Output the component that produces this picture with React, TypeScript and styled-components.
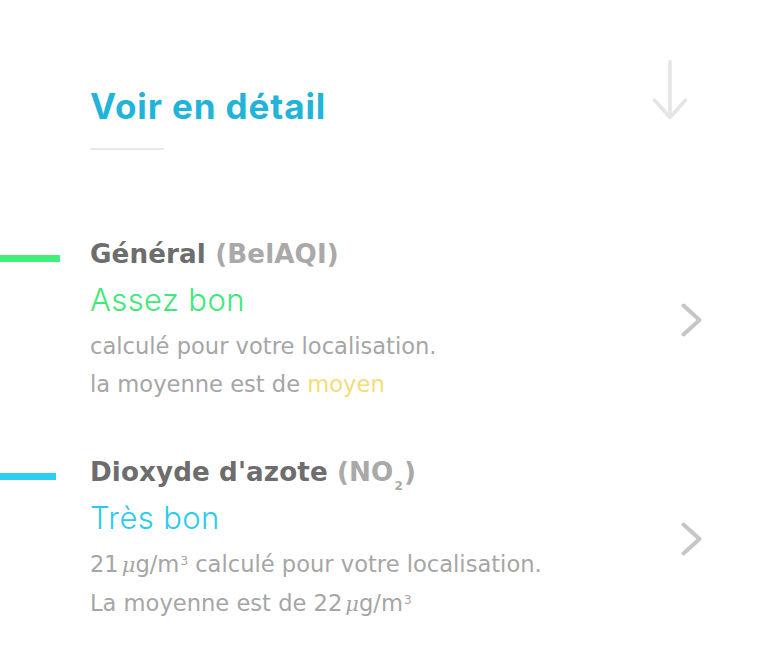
import React from "react";
import styled, { createGlobalStyle } from "styled-components";

const Global = createGlobalStyle`
  html, body { margin: 0; padding: 0; background: #ffffff; }
  body { font-family: "DejaVu Sans", "Noto Sans", sans-serif; -webkit-font-smoothing: antialiased; }
`;

const Page = styled.div`
  width: 760px;
  height: 651px;
  overflow: hidden;
  background: #fff;
  padding-top: 58px;
  box-sizing: border-box;
`;

const Header = styled.div`
  display: flex;
  align-items: flex-start;
  justify-content: space-between;
  padding: 0 72px 0 90px;
`;

const TitleBlock = styled.div`
  display: flex;
  flex-direction: column;
`;

const Title = styled.h1`
  margin: 27px 0 0;
  font-family: Inter, "Noto Sans", sans-serif;
  font-size: 35px;
  line-height: 42px;
  font-weight: 700;
  color: #21b4d8;
  letter-spacing: 0.9px;
`;

const Rule = styled.div`
  width: 74px;
  height: 2px;
  background: #e8e8e8;
  margin-top: 21px;
`;

const ArrowBox = styled.div`
  width: 36px;
  height: 62px;
  display: flex;
`;

const List = styled.div`
  display: flex;
  flex-direction: column;
  gap: 52px;
  margin-top: 87px;
`;

const Row = styled.div`
  display: flex;
  align-items: center;
  position: relative;
`;

const Marker = styled.div<{ $color: string; $width: number }>`
  position: absolute;
  left: 0;
  top: 18px;
  width: ${(p) => p.$width}px;
  height: 7px;
  background: ${(p) => p.$color};
`;

const Body = styled.div`
  flex: 1;
  padding-left: 90px;
  display: flex;
  flex-direction: column;
`;

const Heading = styled.div`
  font-size: 26.2px;
  line-height: 34px;
  font-weight: 700;
  letter-spacing: 0.1px;
  color: #6d6d6d;
`;

const Paren = styled.span`
  color: #a9a9a9;
`;

const Sub = styled.span`
  font-size: 12px;
  vertical-align: -9px;
  line-height: 0;
  margin: 0 1px;
`;

const Status = styled.div<{ $color: string }>`
  font-family: Inter, "Noto Sans", sans-serif;
  font-size: 31px;
  line-height: 40px;
  font-weight: 300;
  letter-spacing: 0.4px;
  color: ${(p) => p.$color};
  margin-top: 9px;
  margin-bottom: 8px;
`;

const Line = styled.div`
  font-size: 22.6px;
  line-height: 37.5px;
  font-weight: 400;
  color: #a6a6a6;
`;

const Highlight = styled.span`
  color: #f4dc79;
`;

const Unit = styled.span`
  font-family: "DejaVu Serif", serif;
  font-style: italic;
  font-size: 21px;
  margin-left: 3px;
`;

const Sup = styled.span`
  font-size: 12px;
  vertical-align: 7px;
  line-height: 0;
  margin-left: 1px;
`;

const ChevronBox = styled.div`
  width: 24px;
  display: flex;
  margin-right: 56px;
`;

const ArrowDown = () => (
  <svg width="36" height="62" viewBox="0 0 36 62" fill="none" stroke="#e5e5e5" strokeWidth="3.5" strokeLinecap="round" strokeLinejoin="round">
    <path d="M18 3.5 V59" />
    <path d="M2.5 42 L18 59.5 L33.5 42" />
  </svg>
);

const Chevron = () => (
  <svg width="24" height="36" viewBox="0 0 24 36" fill="none" stroke="#c6c6c6" strokeWidth="4" strokeLinecap="round" strokeLinejoin="round">
    <path d="M3.5 3.5 L19.5 18 L3.5 32.5" />
  </svg>
);

const Mu = () => <Unit>μ</Unit>;

export default function App() {
  return (
    <>
      <Global />
      <Page>
        <Header>
          <TitleBlock>
            <Title>Voir en détail</Title>
            <Rule />
          </TitleBlock>
          <ArrowBox>
            <ArrowDown />
          </ArrowBox>
        </Header>
        <List>
          <Row>
            <Marker $color="#3ff07b" $width={60} />
            <Body>
              <Heading>
                Général <Paren>(BelAQI)</Paren>
              </Heading>
              <Status $color="#3ee879">Assez bon</Status>
              <Line>calculé pour votre localisation.</Line>
              <Line>
                la moyenne est de <Highlight>moyen</Highlight>
              </Line>
            </Body>
            <ChevronBox>
              <Chevron />
            </ChevronBox>
          </Row>
          <Row>
            <Marker $color="#2dcdf0" $width={56} />
            <Body>
              <Heading>
                Dioxyde d'azote{" "}
                <Paren>
                  (NO<Sub>2</Sub>)
                </Paren>
              </Heading>
              <Status $color="#2ccbee">Très bon</Status>
              <Line>
                21<Mu />g/m<Sup>3</Sup> calculé pour votre localisation.
              </Line>
              <Line>
                La moyenne est de 22<Mu />g/m<Sup>3</Sup>
              </Line>
            </Body>
            <ChevronBox>
              <Chevron />
            </ChevronBox>
          </Row>
        </List>
      </Page>
    </>
  );
}
